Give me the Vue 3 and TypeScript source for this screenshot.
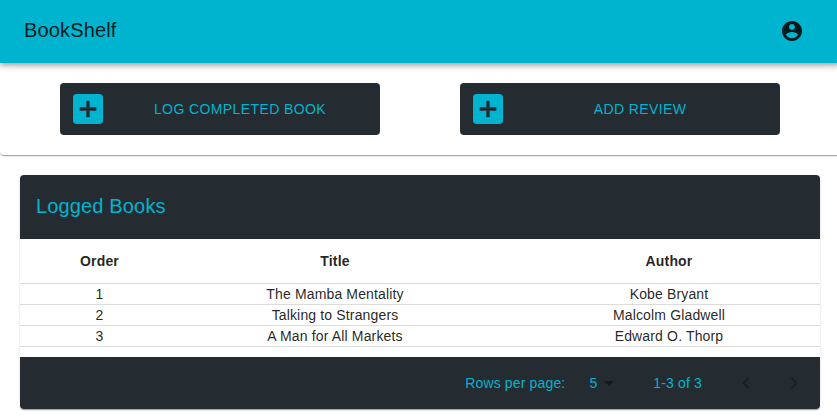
<script setup lang="ts">
interface Book {
  order: number
  title: string
  author: string
}

const actions: string[] = ['Log completed book', 'Add review']

const books: Book[] = [
  { order: 1, title: 'The Mamba Mentality', author: 'Kobe Bryant' },
  { order: 2, title: 'Talking to Strangers', author: 'Malcolm Gladwell' },
  { order: 3, title: 'A Man for All Markets', author: 'Edward O. Thorp' },
]
</script>

<template>
  <div class="page">
    <header class="app-bar">
      <h1 class="brand">BookShelf</h1>
      <svg class="account" viewBox="0 0 24 24" aria-label="Account">
        <path d="M12 2C6.48 2 2 6.48 2 12s4.48 10 10 10 10-4.48 10-10S17.52 2 12 2zm0 3c1.66 0 3 1.34 3 3s-1.34 3-3 3-3-1.34-3-3 1.34-3 3-3zm0 14.2c-2.5 0-4.71-1.28-6-3.22.03-1.99 4-3.08 6-3.08 1.99 0 5.97 1.09 6 3.08-1.29 1.94-3.5 3.22-6 3.22z" />
      </svg>
    </header>

    <section class="actions">
      <button v-for="label in actions" :key="label" class="action" type="button">
        <svg class="add" viewBox="0 0 24 24">
          <path d="M19 3H5c-1.11 0-2 .9-2 2v14c0 1.1.89 2 2 2h14c1.1 0 2-.9 2-2V5c0-1.1-.9-2-2-2zm-2 10h-4v4h-2v-4H7v-2h4V7h2v4h4v2z" />
        </svg>
        <span class="label">{{ label }}</span>
      </button>
    </section>

    <main class="card">
      <h2 class="card-title">Logged Books</h2>
      <table class="books">
        <colgroup>
          <col class="col-order" />
          <col class="col-title" />
          <col class="col-author" />
        </colgroup>
        <thead>
          <tr>
            <th>Order</th>
            <th>Title</th>
            <th>Author</th>
          </tr>
        </thead>
        <tbody>
          <tr v-for="book in books" :key="book.order">
            <td>{{ book.order }}</td>
            <td>{{ book.title }}</td>
            <td>{{ book.author }}</td>
          </tr>
        </tbody>
      </table>
      <footer class="pagination">
        <span>Rows per page:</span>
        <span class="select">
          5
          <svg class="caret" viewBox="0 0 24 24"><path d="M7 10l5 5 5-5z" /></svg>
        </span>
        <span class="range">1-3 of 3</span>
        <span class="pager">
          <svg viewBox="0 0 24 24"><path d="M15.41 7.41L14 6l-6 6 6 6 1.41-1.41L10.83 12z" /></svg>
          <svg viewBox="0 0 24 24"><path d="M10 6L8.59 7.41 13.17 12l-4.58 4.59L10 18l6-6z" /></svg>
        </span>
      </footer>
    </main>
  </div>
</template>

<style>
body {
  margin: 0;
  background: #fff;
  overflow: hidden;
}
</style>

<style scoped>
.page {
  width: 840px;
  font-family: 'Liberation Sans', Arial, sans-serif;
  font-size: 14px;
  letter-spacing: 0.15px;
  color: rgba(0, 0, 0, 0.87);
}

.app-bar {
  position: relative;
  z-index: 1;
  box-sizing: border-box;
  height: 63px;
  padding: 0 36px 2px 24px;
  display: flex;
  align-items: center;
  justify-content: space-between;
  background: #00b4cf;
  box-shadow: 0 2px 4px -1px rgba(0, 0, 0, 0.2), 0 4px 5px 0 rgba(0, 0, 0, 0.14),
    0 1px 10px 0 rgba(0, 0, 0, 0.12);
}

.brand {
  margin: 0 0 2px;
  font-size: 20px;
  font-weight: 400;
  line-height: 32px;
  letter-spacing: 0.15px;
}

.account {
  width: 24px;
  height: 24px;
  margin-top: 1px;
  fill: currentColor;
}

.actions {
  display: flex;
  gap: 80px;
  padding: 20px 60px;
  border-radius: 4px;
  box-shadow: 0 2px 1px -1px rgba(0, 0, 0, 0.2), 0 1px 1px 0 rgba(0, 0, 0, 0.14),
    0 1px 3px 0 rgba(0, 0, 0, 0.12);
}

.action {
  display: grid;
  grid-template-columns: 40px 1fr;
  align-items: center;
  width: 320px;
  height: 52px;
  padding: 0 8px;
  border: 0;
  border-radius: 4px;
  background: #242c31;
  color: #00b4cf;
  font: inherit;
  letter-spacing: 0.4px;
  text-transform: uppercase;
}

.add {
  width: 40px;
  height: 40px;
  fill: currentColor;
}

.card {
  margin: 20px;
  width: 800px;
  border-radius: 4px;
  overflow: hidden;
  box-shadow: 0 2px 1px -1px rgba(0, 0, 0, 0.2), 0 1px 1px 0 rgba(0, 0, 0, 0.14),
    0 1px 3px 0 rgba(0, 0, 0, 0.12);
}

.card-title {
  margin: 0;
  padding: 0 16px 2px;
  font-size: 20px;
  font-weight: 400;
  line-height: 62px;
  letter-spacing: 0.15px;
  color: #00b4cf;
  background: #242c31;
}

.books {
  width: 800px;
  margin-bottom: 10px;
  table-layout: fixed;
  border-collapse: separate;
  border-spacing: 0;
  text-align: center;
}

.col-order {
  width: 159px;
}

.col-title {
  width: 312px;
}

th,
td {
  box-sizing: border-box;
  height: 21px;
  padding: 0;
  line-height: 20px;
  border-bottom: 1px solid #dcdcdc;
}

th {
  height: 45px;
}

th:last-child,
td:last-child {
  padding-left: 27px;
}

.pagination {
  display: flex;
  align-items: center;
  justify-content: flex-end;
  height: 52px;
  padding-right: 14px;
  background: #242c31;
  color: #00b4cf;
}

.select {
  display: flex;
  align-items: center;
  margin-left: 24px;
}

.caret {
  width: 24px;
  height: 24px;
  fill: #14191c;
}

.range {
  margin-left: 32px;
}

.pager {
  display: flex;
  gap: 24px;
  margin-left: 32px;
}

.pager svg {
  width: 24px;
  height: 24px;
  fill: #1b2024;
}
</style>
